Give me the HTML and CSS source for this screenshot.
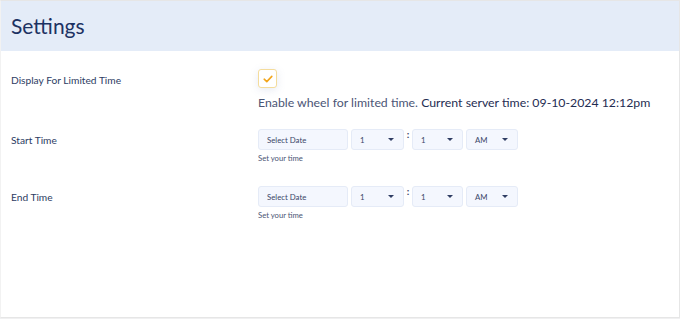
FILE: index.html
```html
<!DOCTYPE html>
<html>
<head>
<meta charset="utf-8">
<link rel="stylesheet" href="styles.css">
</head>
<body>
<div class="card">
  <div class="header"><h1 class="title">Settings</h1></div>
  <div class="body">
    <div class="row row-limited">
      <div class="label">Display For Limited Time</div>
      <div class="field">
        <span class="check">
          <svg width="10" height="8" viewBox="0 0 10 8"><path d="M1.2 4.2 L3.8 6.6 L8.8 1.4" fill="none" stroke="#f2a51c" stroke-width="1.6" stroke-linecap="round" stroke-linejoin="round"/></svg>
        </span>
        <div class="desc">Enable wheel for limited time. <span class="strong">Current server time: 09-10-2024 12:12pm</span></div>
      </div>
    </div>
    <div class="row row-time">
      <div class="label">Start Time</div>
      <div class="field">
        <div class="controls">
          <span class="date">Select Date</span>
          <span class="sel sel-h">1<i class="caret"></i></span>
          <span class="colon">:</span>
          <span class="sel sel-m">1<i class="caret"></i></span>
          <span class="sel sel-ap">AM<i class="caret"></i></span>
        </div>
        <div class="hint">Set your time</div>
      </div>
    </div>
    <div class="row row-time">
      <div class="label">End Time</div>
      <div class="field">
        <div class="controls">
          <span class="date">Select Date</span>
          <span class="sel sel-h">1<i class="caret"></i></span>
          <span class="colon">:</span>
          <span class="sel sel-m">1<i class="caret"></i></span>
          <span class="sel sel-ap">AM<i class="caret"></i></span>
        </div>
        <div class="hint">Set your time</div>
      </div>
    </div>
  </div>
</div>
</body>
</html>
```
FILE: styles.css
```css
html, body { margin: 0; padding: 0; }
body {
  width: 680px;
  height: 319px;
  background: #f0f0f1;
  font-family: Lato, "Noto Sans", sans-serif;
  color: #2a3a63;
}
.card {
  box-sizing: border-box;
  width: 680px;
  height: 318px;
  background: #fff;
  border-top: 1px solid #e6e6e6;
  border-right: 1px solid #e6e6e6;
  border-bottom: 1px solid #e6e6e6;
  border-left: 1px solid #f2f2f2;
}
.header {
  height: 50px;
  background: #e4ecf8;
  display: flex;
  align-items: center;
  padding-left: 10px;
}
.title {
  margin: 0;
  font-weight: 400;
  font-size: 21px;
  color: #1c3263;
  position: relative;
  top: -1px;
}
.body { padding-left: 10px; }
.row { display: flex; }
.label {
  flex: 0 0 247px;
  font-size: 10.2px;
  color: #2d3c63;
}
.row-limited { padding-top: 18px; height: 60px; }
.row-limited .label { padding-top: 5px; }
.check {
  box-sizing: border-box;
  width: 19px;
  height: 19px;
  border: 1px solid #f4dc9c;
  border-radius: 3px;
  background: #fff;
  display: flex;
  align-items: center;
  justify-content: center;
  box-shadow: 0 2px 8px rgba(120,140,190,0.18);
}
.desc {
  margin-top: 7px;
  font-size: 12.3px;
  color: #4b5575;
  white-space: nowrap;
}
.desc .strong { color: #1f2d52; }
.row-time { height: 57px; }
.row-time .label { padding-top: 5px; }
.controls { display: flex; align-items: flex-start; }
.date, .sel {
  box-sizing: border-box;
  height: 21px;
  background: #f4f7fe;
  border: 1px solid #e5ebf7;
  border-radius: 3px;
  font-size: 7.8px;
  color: #3a4668;
  display: flex;
  align-items: center;
  padding-left: 8px;
}
.date { width: 90px; margin-right: 3px; }
.sel { position: relative; }
.sel-h { width: 53px; }
.sel-m { width: 51px; margin-right: 3px; }
.sel-ap { width: 52px; }
.caret {
  position: absolute;
  right: 9px;
  top: 8px;
  width: 0; height: 0;
  border-left: 3.5px solid transparent;
  border-right: 3.5px solid transparent;
  border-top: 3.5px solid #2f3d63;
}
.colon {
  width: 8px;
  text-align: center;
  font-size: 10px;
  font-weight: 700;
  line-height: 11px;
  color: #3a4668;
}
.hint {
  margin-top: 3px;
  font-size: 7.7px;
  color: #4b5575;
}
```
